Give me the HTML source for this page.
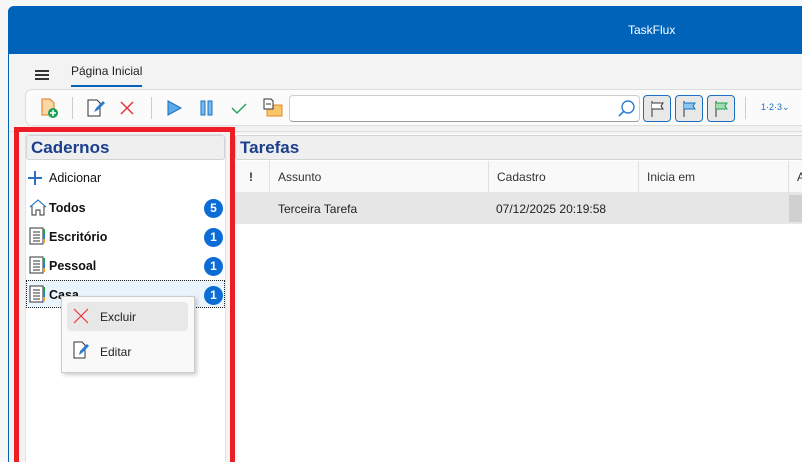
<!DOCTYPE html>
<html style="width:802px;height:462px;overflow:hidden"><head><meta charset="utf-8"><style>
*{box-sizing:border-box;margin:0;padding:0}
html,body{width:802px;height:462px;overflow:hidden}
body{background:#f7f7f7;font-family:"Liberation Sans",sans-serif;font-size:12px;color:#222;position:relative}
.a{position:absolute}
.win{left:8px;top:6px;width:794px;height:456px;background:#f3f3f3;border-left:1px solid #0063b8;border-radius:6px 0 0 0;overflow:hidden}
.title{left:8px;top:6px;width:794px;height:48px;background:#0063ba;border-radius:6px 0 0 0}
.badge{width:19px;height:19px;border-radius:50%;background:#0b6cd6;color:#fff;font-weight:bold;font-size:12px;text-align:center;line-height:19px}
.item{font-weight:bold;font-size:12.5px;color:#111}
.col{border-right:1px solid #e0e0e0;height:32px;top:161px;line-height:32px;padding-left:8px;font-size:12px;color:#333}
.flag{width:28px;height:27px;border:1px solid #1a6fc0;border-radius:4px;background:#e8e8e8;top:95px}
</style></head><body>
<div class="a win"></div>
<div class="a title"></div>
<div class="a" style="left:628px;top:23px;color:#fff;font-size:12px">TaskFlux</div>
<div class="a" style="left:35px;top:70px;width:14px;height:1.5px;background:#333"></div>
<div class="a" style="left:35px;top:74px;width:14px;height:1.5px;background:#333"></div>
<div class="a" style="left:35px;top:78px;width:14px;height:1.5px;background:#333"></div>
<div class="a" style="left:71px;top:64px;font-size:12px;color:#222">Página Inicial</div>
<div class="a" style="left:71px;top:85px;width:71px;height:2px;background:#0063b8"></div>
<div class="a" style="left:25px;top:89px;width:777px;height:37px;background:#fbfbfb;border:1px solid #ddd;border-right:none;border-radius:7px 0 0 7px"></div>
<svg class="a" style="left:38px;top:97px" width="24" height="22" viewBox="0 0 24 22"><path d="M4 2h8l4 4v12H4z" fill="#fbd8a6" stroke="#e07a1f"/><circle cx="15" cy="16" r="5" fill="#1aa153"/><path d="M15 13v6M12 16h6" stroke="#fff" stroke-width="1.6"/></svg>
<div class="a" style="left:72px;top:97px;width:1px;height:22px;background:#ccc"></div>
<svg class="a" style="left:85px;top:97px" width="22" height="22" viewBox="0 0 22 22"><path d="M3 3h9l3 3v13H3z" fill="#fff" stroke="#333"/><path d="M9 15l2-4 7-7 2 2-7 7z" fill="#2c7bd0"/></svg>
<svg class="a" style="left:118px;top:99px" width="18" height="18"><path d="M3 3l12 12M15 3L3 15" stroke="#e8343a" stroke-width="1.5"/></svg>
<div class="a" style="left:151px;top:97px;width:1px;height:22px;background:#ccc"></div>
<svg class="a" style="left:165px;top:99px" width="18" height="18"><path d="M3 2l13 7-13 7z" fill="#5ba9e6" stroke="#1a6fc0"/></svg>
<svg class="a" style="left:200px;top:100px" width="14" height="16"><rect x="1" y="1" width="4" height="14" fill="#7ab9ee" stroke="#1a6fc0"/><rect x="8" y="1" width="4" height="14" fill="#7ab9ee" stroke="#1a6fc0"/></svg>
<svg class="a" style="left:230px;top:100px" width="18" height="16"><path d="M2 8l5 5 9-9" stroke="#2aa55b" stroke-width="1.5" fill="none"/></svg>
<svg class="a" style="left:262px;top:97px" width="22" height="22"><rect x="5" y="8" width="15" height="11" fill="#f9c56b" stroke="#e08b2a"/><path d="M2 2h7l2 2v8H2z" fill="#fff" stroke="#333"/><path d="M4 7h5" stroke="#333"/></svg>
<div class="a" style="left:289px;top:95px;width:351px;height:27px;background:#fff;border:1px solid #ccc;border-bottom-color:#999;border-radius:4px"></div>
<svg class="a" style="left:617px;top:99px" width="20" height="20"><circle cx="11" cy="8" r="6" fill="none" stroke="#2b7fd0" stroke-width="1.4"/><path d="M7 12l-5 5" stroke="#2b7fd0" stroke-width="1.6"/></svg>
<div class="a flag" style="left:643px"></div>
<div class="a flag" style="left:675px"></div>
<div class="a flag" style="left:707px"></div>
<svg class="a" style="left:650px;top:100px" width="16" height="18"><path d="M2 1v16" stroke="#333"/><path d="M2 3h11l-2 3 2 3H2" fill="#fff" stroke="#333"/></svg>
<svg class="a" style="left:682px;top:100px" width="16" height="18"><path d="M2 1v16" stroke="#333"/><path d="M2 3h11l-2 3 2 3H2" fill="#8ec6ef" stroke="#1a6fc0"/></svg>
<svg class="a" style="left:714px;top:100px" width="16" height="18"><path d="M2 1v16" stroke="#333"/><path d="M2 3h11l-2 3 2 3H2" fill="#9fdcae" stroke="#1aa153"/></svg>
<div class="a" style="left:745px;top:97px;width:1px;height:22px;background:#ccc"></div>
<div class="a" style="left:761px;top:102px;font-size:9px;color:#1a6fc0">1·2·3⌄</div>
<div class="a" style="left:9px;top:131px;width:793px;height:1px;background:#ddd"></div>
<div class="a" style="left:14px;top:127px;width:221px;height:335px;border:5px solid #ee1c25;border-bottom:none"></div>
<div class="a" style="left:25px;top:134px;width:201px;height:328px;background:#fff;border:1px solid #e2e2e2;border-bottom:none"></div>
<div class="a" style="left:26px;top:135px;width:199px;height:25px;background:#efefef;border:1px solid #d3d3d3;border-radius:3px"></div>
<div class="a" style="left:31px;top:138px;font-size:17px;font-weight:bold;color:#1b3f8c">Cadernos</div>
<svg class="a" style="left:27px;top:170px" width="16" height="16"><path d="M8 1v14M1 8h14" stroke="#2b6fc0" stroke-width="2"/></svg>
<div class="a" style="left:49px;top:171px;font-size:12.5px;color:#111">Adicionar</div>
<svg class="a" style="left:29px;top:198px" width="18" height="18"><path d="M1 9L9 2l8 7M3 8v9h4v-5h4v5h4V8" fill="none" stroke="#333"/><path d="M1 9L9 2l8 7" fill="none" stroke="#2b7fd0"/></svg>
<div class="a item" style="left:49px;top:201px">Todos</div>
<div class="a badge" style="left:204px;top:199px">5</div>
<svg width="0" height="0" style="position:absolute"><defs><g id="nb"><rect x="1" y="1" width="13" height="16" fill="#fff" stroke="#333"/><path d="M4 5h7M4 8h7M4 11h7M4 14h7" stroke="#333"/><rect x="14" y="2" width="2" height="5" fill="#1aa153"/><rect x="14" y="7" width="2" height="5" fill="#2b7fd0"/><rect x="14" y="12" width="2" height="4" fill="#f59a23"/></g></defs></svg>
<svg class="a" style="left:29px;top:227px" width="18" height="18"><use href="#nb"/></svg>
<div class="a item" style="left:49px;top:230px">Escritório</div>
<div class="a badge" style="left:204px;top:228px">1</div>
<svg class="a" style="left:29px;top:256px" width="18" height="18"><use href="#nb"/></svg>
<div class="a item" style="left:49px;top:259px">Pessoal</div>
<div class="a badge" style="left:204px;top:257px">1</div>
<div class="a" style="left:26px;top:280px;width:199px;height:28px;background:#eaf4fd;border:1px dotted #222"></div>
<svg class="a" style="left:29px;top:285px" width="18" height="18"><use href="#nb"/></svg>
<div class="a item" style="left:49px;top:288px">Casa</div>
<div class="a badge" style="left:204px;top:286px">1</div>
<div class="a" style="left:61px;top:296px;width:134px;height:77px;background:#f9f9f9;border:1px solid #ccc;box-shadow:2px 2px 4px rgba(0,0,0,.2)"></div>
<div class="a" style="left:67px;top:302px;width:121px;height:29px;background:#e8e8e8;border-radius:4px"></div>
<svg class="a" style="left:73px;top:308px" width="16" height="16"><path d="M1 1l14 14M15 1L1 15" stroke="#e8343a" stroke-width="1.2"/></svg>
<div class="a" style="left:100px;top:310px;font-size:12px">Excluir</div>
<svg class="a" style="left:72px;top:340px" width="20" height="20"><path d="M2 2h8l3 3v13H2z" fill="#fff" stroke="#333"/><path d="M7 15l1-4 7-7 2 2-7 7z" fill="#2c7bd0"/></svg>
<div class="a" style="left:100px;top:345px;font-size:12px">Editar</div>
<div class="a" style="left:235px;top:134px;width:567px;height:328px;background:#fff"></div>
<div class="a" style="left:235px;top:135px;width:567px;height:25px;background:#efefef;border:1px solid #d3d3d3;border-right:none;border-radius:3px 0 0 3px"></div>
<div class="a" style="left:240px;top:138px;font-size:17px;font-weight:bold;color:#1b3f8c">Tarefas</div>
<div class="a" style="left:235px;top:161px;width:567px;height:32px;background:#f9f9f9;border-bottom:1px solid #e6e6e6"></div>
<div class="a col" style="left:235px;width:35px;font-weight:bold;padding-left:14px">!</div>
<div class="a col" style="left:270px;width:219px">Assunto</div>
<div class="a col" style="left:489px;width:150px">Cadastro</div>
<div class="a col" style="left:639px;width:150px">Inicia em</div>
<div class="a col" style="left:789px;width:13px;border-right:none">A</div>
<div class="a" style="left:235px;top:193px;width:567px;height:31px;background:#e6e6e6"></div>
<div class="a" style="left:789px;top:195px;width:13px;height:27px;background:#d0d0d0"></div>
<div class="a" style="left:278px;top:202px;font-size:12px">Terceira Tarefa</div>
<div class="a" style="left:496px;top:202px;font-size:12px">07/12/2025 20:19:58</div>
</body></html>
